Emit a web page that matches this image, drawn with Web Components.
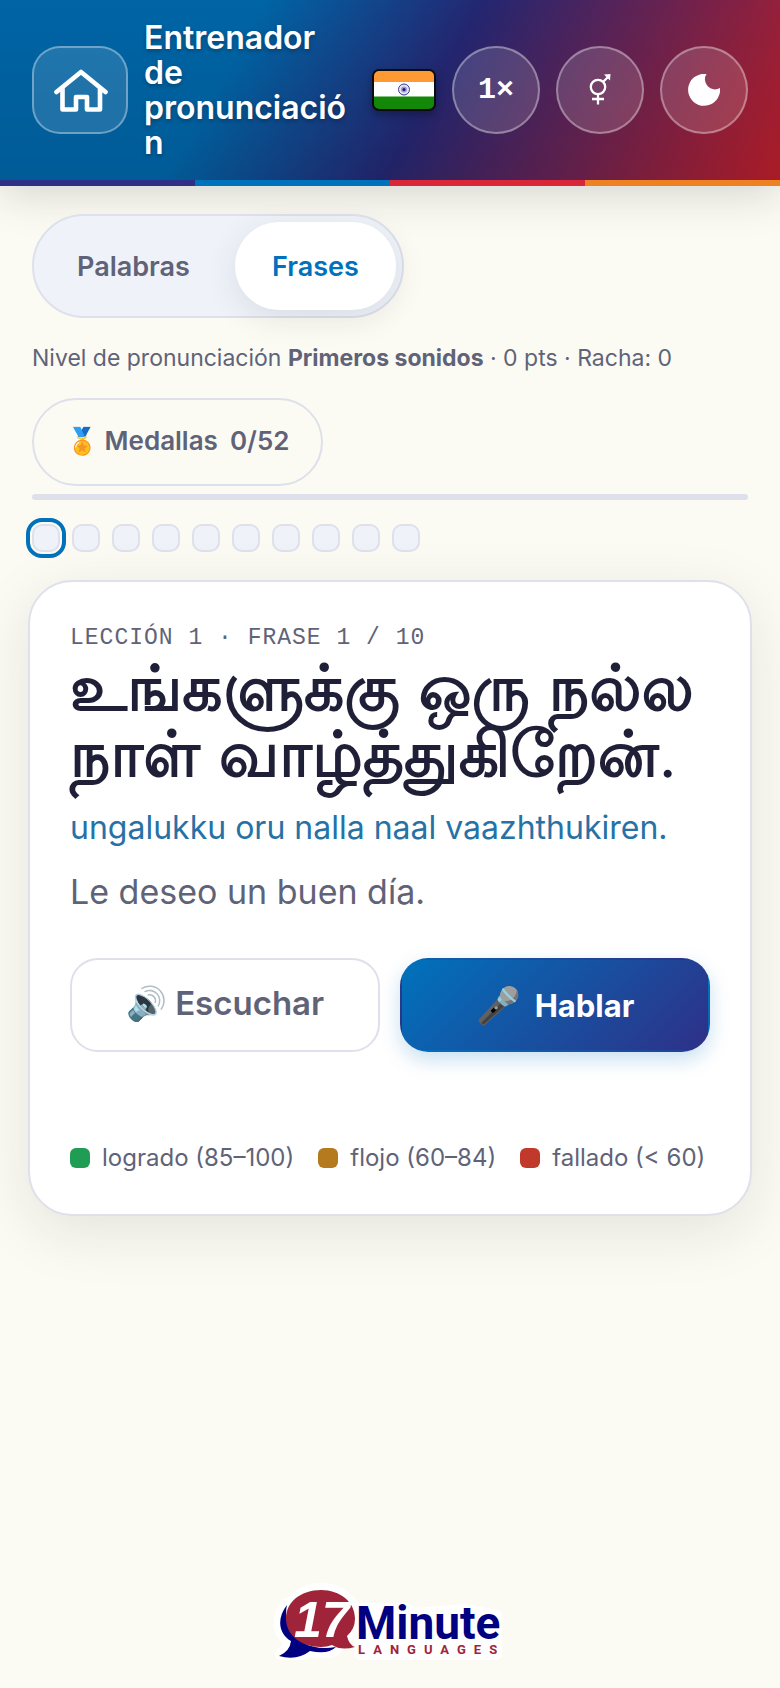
<!DOCTYPE html>
<html lang="es">
<head>
<meta charset="utf-8">
<meta name="viewport" content="width=device-width, initial-scale=1">
<title>Entrenador de pronunciación</title>
<style>
:root {
  --bg: #fbfbf3; --ink: #1f2038; --muted: #606378; --line: #dee0eb; --soft: #eff3f9;
  --blue: #0072bc; --indigo: #2e3087; --red: #d92638; --orange: #ee8222;
}
html { height: 100%; }
body { margin: 0; min-height: 100%; display: flex; background: var(--bg); color: var(--muted); font-family: Inter, sans-serif; }
</style>
</head>
<body>
<trainer-app></trainer-app>
<script>
const define = (name, html) => {
  const tpl = document.createElement('template');
  tpl.innerHTML = `<style>*{box-sizing:border-box}button,a{font-family:inherit}</style>` + html;
  customElements.define(name, class extends HTMLElement {
    constructor() {
      super();
      this.attachShadow({ mode: 'open' }).append(tpl.content.cloneNode(true));
    }
  });
};

define('round-button', `
<style>
:host { display: block; flex: none; }
button { width: 88px; height: 88px; padding: 0; border-radius: 44px; border: 2px solid rgba(255,255,255,.35);
  background: rgba(255,255,255,.14); color: #fff; display: flex; align-items: center; justify-content: center; }
</style>
<button type="button"><slot></slot></button>`);

define('india-flag', `
<style>:host { display: block; flex: none; } svg { display: block; filter: drop-shadow(0 4px 4px rgba(0,0,0,.3)); }</style>
<svg width="64" height="42" viewBox="0 0 64 42" role="img" aria-label="India">
  <clipPath id="c"><rect x="1" y="1" width="62" height="40" rx="6"/></clipPath>
  <g clip-path="url(#c)">
    <rect width="64" height="42" fill="#fff"/>
    <rect width="64" height="13" fill="#ff9933"/>
    <rect y="27.500" width="64" height="15" fill="#138808"/>
  </g>
  <circle cx="32" cy="20.500" r="5.500" fill="#e4e4f4" stroke="#3a3a98" stroke-width="1"/>
  <circle cx="32" cy="20.500" r="3" fill="#9c9ccc"/>
  <circle cx="32" cy="20.500" r="1.500" fill="#1c1c80"/>
  <rect x="1" y="1" width="62" height="40" rx="6" fill="none" stroke="#0b0b10" stroke-width="2"/>
</svg>`);

define('app-header', `
<style>
:host { display: block; box-shadow: 0 8px 40px rgba(30,30,50,.17); }
.bar { display: flex; align-items: center; gap: 16px; padding: 18px 32px; min-height: 180px;
  background: linear-gradient(180deg, rgba(0,0,0,.12), rgba(0,0,0,.2)), linear-gradient(120deg, var(--blue) 30%, #292b80 55%, #d4222f); }
.home { flex: none; width: 96px; height: 88px; border-radius: 28px; border: 2px solid rgba(255,255,255,.35);
  background: rgba(255,255,255,.12); display: flex; align-items: center; justify-content: center; }
h1 { flex: 1; min-width: 0; margin: 0; color: #fff; font-size: 32px; line-height: 35px; font-weight: 600;
  overflow-wrap: anywhere; text-shadow: 0 2px 4px rgba(0,0,0,.3); }
.speed { font: 700 30px "Liberation Mono", monospace; }
svg { display: block; }
.stripe { height: 6px; background: linear-gradient(90deg, var(--indigo) 25%, var(--blue) 25% 50%, var(--red) 50% 75%, var(--orange) 75%); }
</style>
<header>
<div class="bar">
  <a class="home" href="#" aria-label="Inicio">
    <svg width="56" height="48" viewBox="0 0 56 48" fill="none" stroke="#fff" stroke-width="4.600" stroke-linejoin="round" stroke-linecap="round">
      <path d="M4.500 26 29 6 53.500 26M10.500 22V43.500H24V31H35V43.500H48V22"/>
    </svg>
  </a>
  <h1>Entrenador de pronunciación</h1>
  <india-flag></india-flag>
  <round-button><span class="speed">1×</span></round-button>
  <round-button><svg width="32" height="32" viewBox="0 0 32 32" fill="none" stroke="#fff" stroke-width="2.300" aria-label="Género"><circle cx="14" cy="13" r="7.200"/><path d="M14 20.500V30.500M8 25H20M19 8 24.500 2.500"/><path d="M20 .500 26.500 0 26 6.500Z" fill="#fff" stroke="none"/></svg></round-button>
  <round-button><svg width="32" height="32" viewBox="0 0 32 32" aria-label="Modo oscuro"><path d="M18.500 0A16 16 0 1 0 32 14A10 10 0 0 1 18.500 0Z" fill="#fff"/></svg></round-button>
</div>
<div class="stripe"></div>
</header>`);

define('mode-switch', `
<style>
:host { display: flex; align-self: flex-start; gap: 8px; padding: 6px; border: 2px solid var(--line); border-radius: 52px; background: var(--soft); }
button { height: 88px; padding: 0 37px; border: 0; border-radius: 44px; background: none; color: var(--muted); font-size: 27px; font-weight: 600; }
.on { background: #fff; color: var(--blue); box-shadow: 0 8px 32px rgba(30,30,50,.1); }
</style>
<button type="button" aria-pressed="false">Palabras</button><button type="button" class="on" aria-pressed="true">Frases</button>`);

define('level-status', `
<style>
:host { display: flex; flex-direction: column; align-items: flex-start; }
p { margin: 0; font-size: 23px; line-height: 32px; }
.medals { margin-top: 24px; height: 88px; padding: 0 32px 4px; border: 2px solid var(--line); border-radius: 44px; background: none;
  color: var(--muted); font-size: 26px; font-weight: 600; display: flex; align-items: center; gap: 12px; }
.track { align-self: stretch; height: 6px; margin-top: 8px; border-radius: 3px; background: var(--line); }
</style>
<p>Nivel de pronunciación <b>Primeros sonidos</b> · 0 pts · Racha: 0</p>
<button type="button" class="medals"><span>🏅 Medallas</span><span>0/52</span></button>
<div class="track" role="progressbar" aria-valuenow="0"></div>`);

define('step-dots', `
<style>
:host { display: flex; gap: 12px; }
i { width: 28px; height: 28px; border: 2px solid var(--line); border-radius: 10px; background: var(--soft); }
.now { outline: 4px solid var(--blue); outline-offset: 2px; }
</style>
<i class="now"></i><i></i><i></i><i></i><i></i><i></i><i></i><i></i><i></i><i></i>`);

define('legend-item', `
<style>
:host { display: flex; align-items: center; gap: 12px; font-size: 24px; line-height: 32px; white-space: nowrap; }
i { width: 20px; height: 20px; border-radius: 6px; background: var(--tone); }
</style>
<i></i><span><slot></slot></span>`);

define('phrase-card', `
<style>
:host { display: block; padding: 40px; border: 2px solid var(--line); border-radius: 44px; background: #fff; box-shadow: 0 16px 60px rgba(30,30,50,.1); }
p, h2 { margin: 0; }
.kicker { font: 23px/32px "Liberation Mono", monospace; letter-spacing: 1px; text-transform: uppercase; }
h2 { color: var(--ink); font-family: "Lohit Tamil", Inter, sans-serif; font-size: 63px; line-height: 66px; font-weight: 700; margin-top: 8px; }
.roman { color: #2672a6; font-size: 32px; line-height: 40px; margin-top: 14px; }
.meaning { font-size: 34px; line-height: 44px; margin-top: 22px; }
.actions { display: grid; grid-template-columns: 1fr 1fr; gap: 20px; margin-top: 44px; }
button { height: 94px; border: 2px solid var(--line); border-radius: 28px; background: #fff; color: var(--muted); font-size: 33px; font-weight: 600; padding: 0 0 4px; }
.talk { border-color: transparent; background: linear-gradient(135deg, var(--blue), var(--indigo)); color: #fff; font-size: 31px; font-weight: 700; padding: 0;
  box-shadow: 0 8px 20px rgba(0,114,188,.22); display: flex; align-items: center; justify-content: center; gap: 14px; }
.talk span { font-size: 36px; }
.legend { display: flex; flex-wrap: wrap; gap: 12px 24px; margin-top: 90px; }
</style>
<p class="kicker">Lección 1 · Frase 1 / 10</p>
<h2 lang="ta">உங்களுக்கு ஒரு நல்ல நாள் வாழ்த்துகிறேன்.</h2>
<p class="roman">ungalukku oru nalla naal vaazhthukiren.</p>
<p class="meaning">Le deseo un buen día.</p>
<div class="actions">
  <button type="button">🔊 Escuchar</button>
  <button type="button" class="talk"><span>🎤</span>Hablar</button>
</div>
<div class="legend">
  <legend-item style="--tone:#1f9d55">logrado (85–100)</legend-item>
  <legend-item style="--tone:#b57a1e">flojo (60–84)</legend-item>
  <legend-item style="--tone:#c0392b">fallado (&lt; 60)</legend-item>
</div>`);

define('brand-logo', `
<style>:host { display: block; } svg { display: block; }</style>
<svg width="240" height="86" viewBox="0 0 240 86" role="img" aria-label="17 Minute Languages">
  <g stroke="#fff" stroke-width="14" stroke-linejoin="round" fill="#fff">
    <path d="M17 31C6 47 10 60 21 68Q20 76 12 80Q27 83 38 75Q60 80 66 74Z"/>
    <ellipse cx="51" cy="44" rx="34" ry="28"/>
    <path d="M90 35H136L144 40 196 36 226 42V80H90Z" stroke-width="12"/>
  </g>
  <path d="M17 31C6 45 9 60 21 67Q20 77 9 82Q27 87 40 77Q58 81 66 73Q34 78 20 56Q14 44 17 31Z" fill="#000080"/>
  <path d="M51 16C31 16 16 28 16 44.500S31 73 51 73Q57 73 62 71Q71 77 85 73Q79 71 77 62Q85 55 85 44.500C85 28 70 16 51 16Z" fill="#9f2439"/>
  <text x="24" y="63" font-family="'Liberation Sans', sans-serif" font-weight="700" font-style="italic" font-size="50" fill="#fff">17</text>
  <g font-family="Roboto, sans-serif" font-weight="700">
    <text x="86" y="65" font-size="46" fill="#000080">Minute</text>
    <text x="88" y="80" font-size="13" letter-spacing="8" fill="#9f2439">LANGUAGES</text>
  </g>
</svg>`);

define('trainer-app', `
<style>
:host { flex: 1; min-width: 0; display: flex; flex-direction: column; }
main { flex: 1; display: flex; flex-direction: column; padding: 28px 32px; }
level-status { margin-top: 24px; }
step-dots { margin-top: 24px; }
phrase-card { margin: 28px -4px 0; }
footer { display: flex; justify-content: center; padding-bottom: 28px; }
</style>
<app-header></app-header>
<main>
  <mode-switch></mode-switch>
  <level-status></level-status>
  <step-dots></step-dots>
  <phrase-card></phrase-card>
</main>
<footer><brand-logo></brand-logo></footer>`);
</script>
</body>
</html>
